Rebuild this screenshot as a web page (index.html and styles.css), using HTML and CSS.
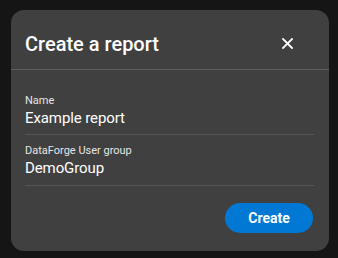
FILE: index.html
```html
<!DOCTYPE html>
<html lang="en">
<head>
    <meta charset="UTF-8">
    <meta name="viewport" content="width=device-width, initial-scale=1.0">
    <title>Create a report</title>
    <link rel="stylesheet" href="styles.css">
</head>
<body>
    <div class="dialog">
        <div class="dialog-header">
            <h1>Create a report</h1>
            <button class="close-btn" aria-label="Close">
                <svg width="11" height="11" viewBox="0 0 11 11">
                    <path d="M1 1 L10 10 M10 1 L1 10" stroke="#fff" stroke-width="1.8" stroke-linecap="square"/>
                </svg>
            </button>
        </div>

        <div class="dialog-body">
            <div class="field first">
                <label>Name</label>
                <div class="value">Example report</div>
            </div>
            <div class="field">
                <label>DataForge User group</label>
                <div class="value">DemoGroup</div>
            </div>
        </div>

        <div class="dialog-footer">
            <button class="create-btn">Create</button>
        </div>
    </div>
</body>
</html>
```

FILE: styles.css
```css
body {
    font-family: Roboto, 'Liberation Sans', sans-serif;
    background: #151515;
    color: white;
    margin: 0;
    padding: 10px 0 0 11px;
}
.dialog {
    width: 318px;
    height: 241px;
    background: #404040;
    border-radius: 13px;
    box-sizing: border-box;
}
.dialog-header {
    display: flex;
    align-items: center;
    justify-content: space-between;
    height: 59px;
    padding: 0 36px 0 14px;
    border-bottom: 1px solid #5e5e5e;
}
.dialog-header h1 {
    margin: 0;
    font-size: 20px;
    font-weight: 500;
    padding-top: 8px;
}
.close-btn {
    background: none;
    border: none;
    padding: 0;
    display: flex;
    margin-top: 7px;
}
.dialog-body {
    padding: 0 15px 0 14px;
}
.field {
    border-bottom: 1px solid #555;
    padding: 8px 0 7px;
}
.field.first {
    padding: 23px 0 6px;
}
.field label {
    display: block;
    font-size: 11px;
    line-height: 15px;
    color: #e6e6e6;
}
.field .value {
    font-size: 15px;
    line-height: 20px;
    letter-spacing: -0.1px;
}
.dialog-footer {
    display: flex;
    justify-content: flex-end;
    padding: 17px 16px 0 0;
}
.create-btn {
    width: 88px;
    height: 30px;
    border: none;
    border-radius: 15px;
    background: #0078d4;
    color: white;
    font-family: Roboto, 'Liberation Sans', sans-serif;
    font-size: 14px;
    font-weight: 700;
}
```
